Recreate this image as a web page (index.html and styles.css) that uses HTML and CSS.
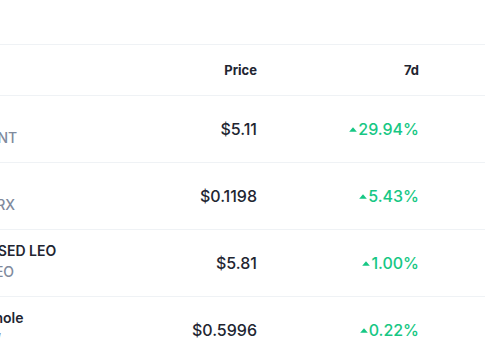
FILE: index.html
```html
<!DOCTYPE html>
<html lang="en">
<head>
<meta charset="utf-8">
<title>Prices</title>
<link rel="stylesheet" href="styles.css">
</head>
<body>
<div class="table">
  <div class="row head">
    <div class="cell name-cell"><span class="hd">Name</span></div>
    <div class="cell num"><span class="hd">Price</span></div>
    <div class="cell num"><span class="hd">7d</span></div>
    <div class="cell num"></div>
  </div>

  <div class="row">
    <div class="cell name-cell">
      <div class="coin">
        <div class="name">Golem</div>
        <div class="sub"><span class="rank">24</span><span class="sym">GNT</span></div>
      </div>
    </div>
    <div class="cell num price">$5.11</div>
    <div class="cell num"><span class="up"><svg class="caret" viewBox="0 0 8 5" width="8" height="5"><path d="M4 0.3 L7.8 4.8 L0.2 4.8 Z"/></svg>29.94%</span></div>
    <div class="cell num"></div>
  </div>

  <div class="row">
    <div class="cell name-cell">
      <div class="coin">
        <div class="name">TRON</div>
        <div class="sub"><span class="rank">10</span><span class="sym">TRX</span></div>
      </div>
    </div>
    <div class="cell num price">$0.1198</div>
    <div class="cell num"><span class="up"><svg class="caret" viewBox="0 0 8 5" width="8" height="5"><path d="M4 0.3 L7.8 4.8 L0.2 4.8 Z"/></svg>5.43%</span></div>
    <div class="cell num"></div>
  </div>

  <div class="row">
    <div class="cell name-cell">
      <div class="coin">
        <div class="name">UNUS SED LEO</div>
        <div class="sub"><span class="rank">18</span><span class="sym">LEO</span></div>
      </div>
    </div>
    <div class="cell num price">$5.81</div>
    <div class="cell num"><span class="up"><svg class="caret" viewBox="0 0 8 5" width="8" height="5"><path d="M4 0.3 L7.8 4.8 L0.2 4.8 Z"/></svg>1.00%</span></div>
    <div class="cell num"></div>
  </div>

  <div class="row">
    <div class="cell name-cell">
      <div class="coin">
        <div class="name">Wormhole</div>
        <div class="sub"><span class="rank">71</span><span class="sym">W</span></div>
      </div>
    </div>
    <div class="cell num price">$0.5996</div>
    <div class="cell num"><span class="up"><svg class="caret" viewBox="0 0 8 5" width="8" height="5"><path d="M4 0.3 L7.8 4.8 L0.2 4.8 Z"/></svg>0.22%</span></div>
    <div class="cell num"></div>
  </div>
</div>
</body>
</html>
```

FILE: styles.css
```css
html, body {
  margin: 0;
  padding: 0;
  background: #ffffff;
  overflow: hidden;
}

body {
  font-family: Inter, "Noto Sans", "Liberation Sans", sans-serif;
  color: #222531;
  width: 485px;
  height: 360px;
}

.table {
  margin-top: 44px;
  margin-left: -60px;
  border-top: 1px solid #eff2f5;
}

.row {
  display: grid;
  grid-template-columns: 200px 125px 162px 120px;
  height: 66px;
  border-bottom: 1px solid #eff2f5;
}

.row.head {
  height: 50px;
}

.cell {
  display: flex;
  align-items: center;
}

.num {
  justify-content: flex-end;
  padding-right: 8px;
}

.hd {
  font-size: 13px;
  font-weight: 700;
  color: #222531;
}

.name-cell {
  padding-left: 14px;
}

.head .name-cell .hd {
  visibility: hidden;
}

.coin {
  display: flex;
  flex-direction: column;
  gap: 3px;
  margin-top: -3px;
}

.name {
  font-size: 14px;
  font-weight: 600;
  line-height: 18px;
  white-space: nowrap;
}

.sub {
  display: flex;
  align-items: center;
  gap: 6px;
  line-height: 18px;
}

.rank {
  font-size: 12px;
  font-weight: 600;
  background: #eff2f5;
  color: #58667e;
  border-radius: 4px;
  width: 24px;
  text-align: center;
  margin-left: 3px;
}

.sym {
  font-size: 14px;
  font-weight: 500;
  color: #808a9d;
}

.price {
  font-size: 16px;
  font-weight: 500;
}

.up {
  display: inline-flex;
  align-items: center;
  gap: 1px;
  color: #16c784;
  font-size: 16px;
  font-weight: 500;
}

.caret {
  fill: #16c784;
  margin-top: 1px;
}
```
